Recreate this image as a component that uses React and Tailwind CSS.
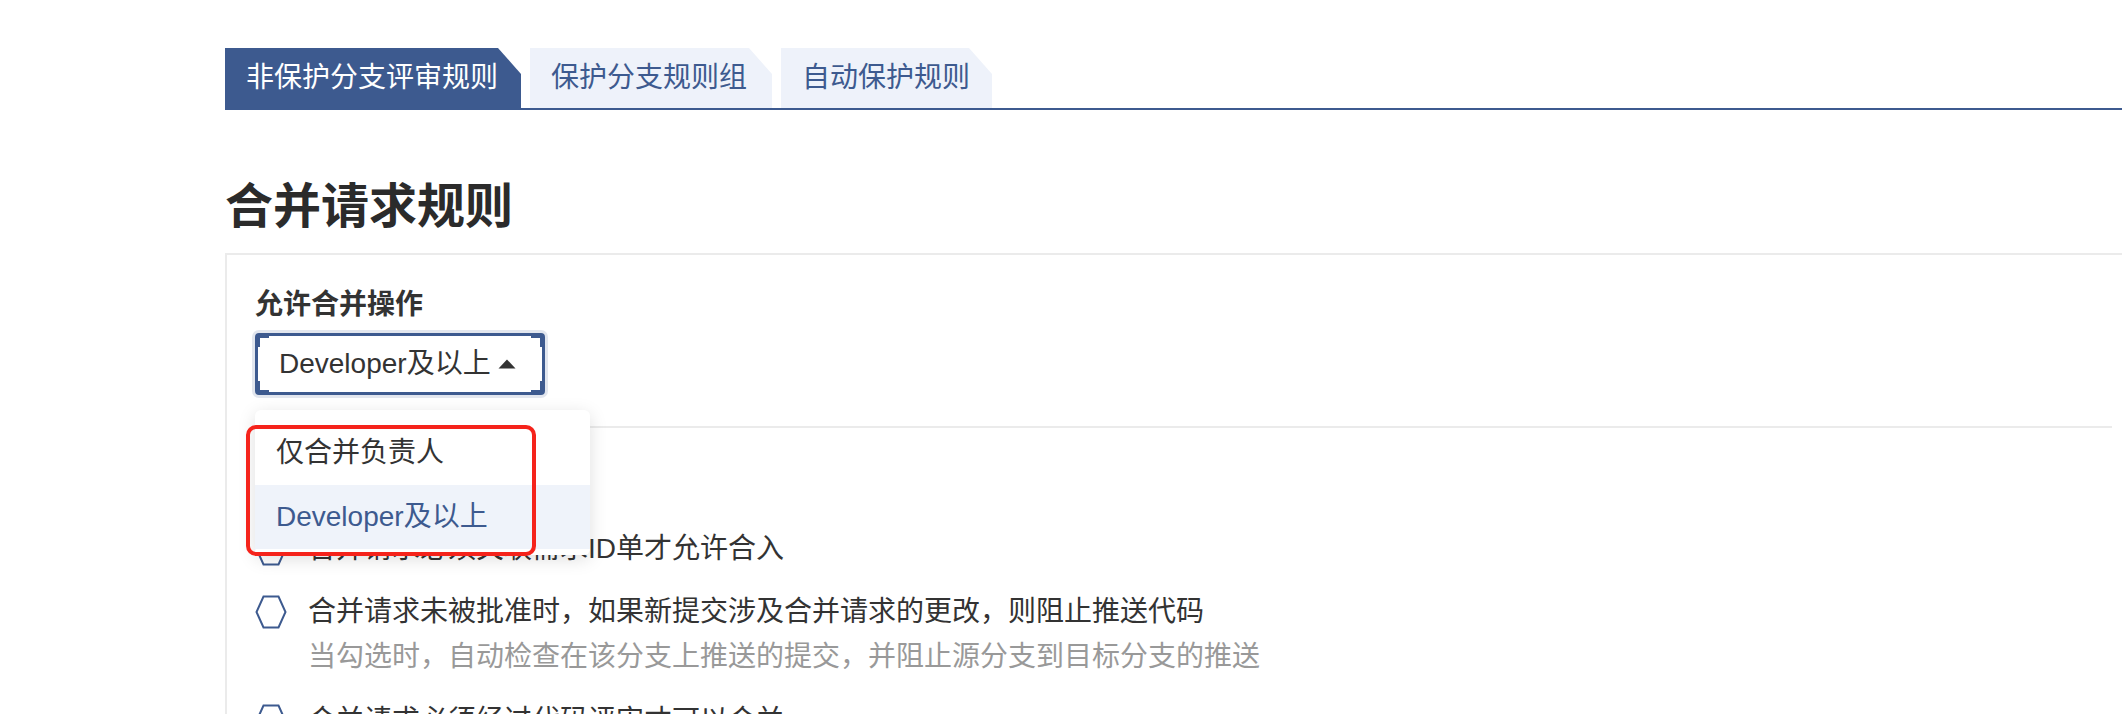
import React from 'react';

const tabs = [
  { label: '非保护分支评审规则', width: 'w-[296px]', active: true },
  { label: '保护分支规则组', width: 'w-[242px]', active: false },
  { label: '自动保护规则', width: 'w-[211px]', active: false },
];

const rules = [
  { title: '合并请求必须关联需求ID单才允许合入' },
  {
    title: '合并请求未被批准时，如果新提交涉及合并请求的更改，则阻止推送代码',
    desc: '当勾选时，自动检查在该分支上推送的提交，并阻止源分支到目标分支的推送',
  },
  { title: '合并请求必须经过代码评审才可以合并' },
];

const Hexagon = () => (
  <svg width="32" height="34" viewBox="0 0 32 34" className="shrink-0">
    <polygon
      points="8.5,1.5 23.5,1.5 30.5,17 23.5,32.5 8.5,32.5 1.5,17"
      fill="#fff"
      stroke="#3d5a8f"
      strokeWidth="2"
    />
  </svg>
);

const App = () => {
  return (
    <div className="min-h-screen bg-white overflow-hidden pl-[225px] pt-[48px] font-['Liberation_Sans','Noto_Sans_CJK_SC',sans-serif] text-[#333]">
      {/* Tabs */}
      <div className="flex items-end gap-[9px] border-b-2 border-[#3d5a8f]">
        {tabs.map((tab) => (
          <div
            key={tab.label}
            className={`${tab.width} h-[60px] flex items-center pl-[21px] text-[28px] [clip-path:polygon(0_0,calc(100%_-_23px)_0,100%_26px,100%_100%,0_100%)] ${
              tab.active ? 'bg-[#3d5a8f] text-white' : 'bg-[#eef2fa] text-[#3d5a8f]'
            }`}
          >
            {tab.label}
          </div>
        ))}
      </div>

      {/* Heading */}
      <h1 className="mt-[61px] h-[72px] leading-[72px] text-[48px] font-bold text-[#2b2b2b]">
        合并请求规则
      </h1>

      {/* Card */}
      <div className="mt-[10px] w-[calc(100%_+_20px)] border-2 border-[#ebebeb] px-[28px] pt-[30px] pb-[40px]">
        <div className="h-[40px] leading-[40px] text-[28px] font-semibold text-[#333]">允许合并操作</div>

        <div className="relative mt-[8px] inline-block">
          {/* Select */}
          <div className="relative flex h-[62px] w-[290px] items-center rounded-[4px] border-[3px] border-[#3d5a8f] pl-[21px] shadow-[0_0_0_3px_rgba(61,90,143,0.15)]">
            <span className="text-[28px] text-[#333]">Developer及以上</span>
            <svg width="18" height="10" viewBox="0 0 18 10" className="ml-[7px]">
              <polygon points="9,0.5 17.5,9.5 0.5,9.5" fill="#333" />
            </svg>
            <span className="absolute left-0 top-0 h-[11px] w-[11px] border-l-2 border-t-2 border-[#3d5a8f]" />
            <span className="absolute right-0 top-0 h-[11px] w-[11px] border-r-2 border-t-2 border-[#3d5a8f]" />
            <span className="absolute left-0 bottom-0 h-[11px] w-[11px] border-l-2 border-b-2 border-[#3d5a8f]" />
            <span className="absolute right-0 bottom-0 h-[11px] w-[11px] border-r-2 border-b-2 border-[#3d5a8f]" />
          </div>

          {/* Dropdown menu */}
          <div className="absolute left-0 top-[77px] z-10 w-[335px] rounded-[6px] bg-white pt-[11px] pb-[6px] shadow-[0_4px_18px_rgba(0,0,0,0.13)]">
            <div className="flex h-[64px] items-center px-[21px] text-[28px] text-[#333]">仅合并负责人</div>
            <div className="flex h-[64px] items-center bg-[#eff3fa] px-[21px] text-[28px] text-[#3d5a8f]">
              Developer及以上
            </div>
          </div>

          {/* Annotation highlight */}
          <div className="absolute left-[-9px] top-[92px] z-20 h-[131px] w-[290px] rounded-[10px] border-4 border-[#f5231b]" />
        </div>

        <div className="mt-[31px] h-[2px] bg-[#ebebeb]" />

        <div className="mt-[24px] h-[44px] leading-[44px] text-[28px] font-semibold">合并条件</div>

        <div className="mt-[31px] flex flex-col gap-[19px]">
          {rules.map((rule) => (
            <div key={rule.title}>
              <div className="flex h-[44px] items-center gap-[21px]">
                <Hexagon />
                <span className="text-[28px] text-[#333]">{rule.title}</span>
              </div>
              {rule.desc && (
                <div className="h-[46px] pl-[53px] leading-[46px] text-[28px] text-[#999]">{rule.desc}</div>
              )}
            </div>
          ))}
        </div>
      </div>
    </div>
  );
};

export default App;
